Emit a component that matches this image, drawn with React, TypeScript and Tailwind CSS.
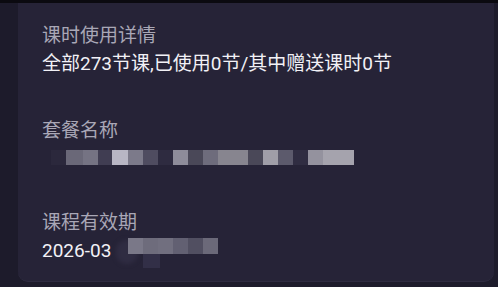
import React from "react";

const row1: { w: string; bg: string }[] = [
  { w: "w-[15px]", bg: "bg-[#2b283c]" },
  { w: "w-[17px]", bg: "bg-[#6a6878]" },
  { w: "w-[15px]", bg: "bg-[#757383]" },
  { w: "w-[14px]", bg: "bg-[#403d52]" },
  { w: "w-[16px]", bg: "bg-[#b8b6c4]" },
  { w: "w-[15px]", bg: "bg-[#7c7a8a]" },
  { w: "w-[15px]", bg: "bg-[#4f4c60]" },
  { w: "w-[15px]", bg: "bg-[#2e2b40]" },
  { w: "w-[15px]", bg: "bg-[#8e8c9a]" },
  { w: "w-[15px]", bg: "bg-[#4a4858]" },
  { w: "w-[15px]", bg: "bg-[#6e6c7c]" },
  { w: "w-[30px]", bg: "bg-[#87858f]" },
  { w: "w-[15px]", bg: "bg-[#4a4858]" },
  { w: "w-[15px]", bg: "bg-[#a09ea8]" },
  { w: "w-[15px]", bg: "bg-[#5c5a6c]" },
  { w: "w-[15px]", bg: "bg-[#302d42]" },
  { w: "w-[15px]", bg: "bg-[#94929e]" },
  { w: "w-[31px]", bg: "bg-[#a5a3ad]" },
];

const row3: string[] = [
  "bg-[#7a7888]",
  "bg-[#6e6c7c]",
  "bg-[#716f7f]",
  "bg-[#626072]",
  "bg-[#514f61]",
  "bg-[#6b6979]",
];

export default function App() {
  return (
    <div
      className="w-[498px] h-[287px] bg-[#1d1b2b] flex flex-col overflow-hidden"
      style={{ fontFamily: 'Roboto, "Noto Sans CJK SC", sans-serif' }}
    >
      <div className="h-[3px] bg-[#0b0a10] shrink-0" />
      <div className="flex pl-[18px] pr-[4px]">
        <div className="w-full h-[279px] bg-[#262337] rounded-b-[10px] border-b border-[#2e2b40] pl-[24px] pt-[19px] text-[19px] leading-[28px]">
          <div className="text-[#a9a7b6]">课时使用详情</div>
          <div className="text-[#f2f1f6]">全部273节课,已使用0节/其中赠送课时0节</div>

          <div className="text-[#a9a7b6] mt-[39px]">套餐名称</div>
          <div className="h-[28px] pt-[5px] pl-[9px] flex">
            {row1.map((b, i) => (
              <div key={i} className={`h-[15px] ${b.w} ${b.bg}`} />
            ))}
          </div>

          <div className="text-[#a9a7b6] mt-[36px]">课程有效期</div>
          <div className="flex items-start text-[#f2f1f6]">
            <span>2026-03</span>
            <div className="relative ml-[17px] mt-[1px] flex">
              <div className="absolute left-[-12px] top-[2px] w-[22px] h-[24px] rounded-full bg-[#2f2c42] blur-[2px]" />
              <div className="absolute left-[15px] top-[16px] w-[17px] h-[14px] bg-[#322f47]" />
              {row3.map((c, i) => (
                <div key={i} className={`relative h-[16px] w-[15px] ${c}`} />
              ))}
            </div>
          </div>
        </div>
      </div>
    </div>
  );
}
